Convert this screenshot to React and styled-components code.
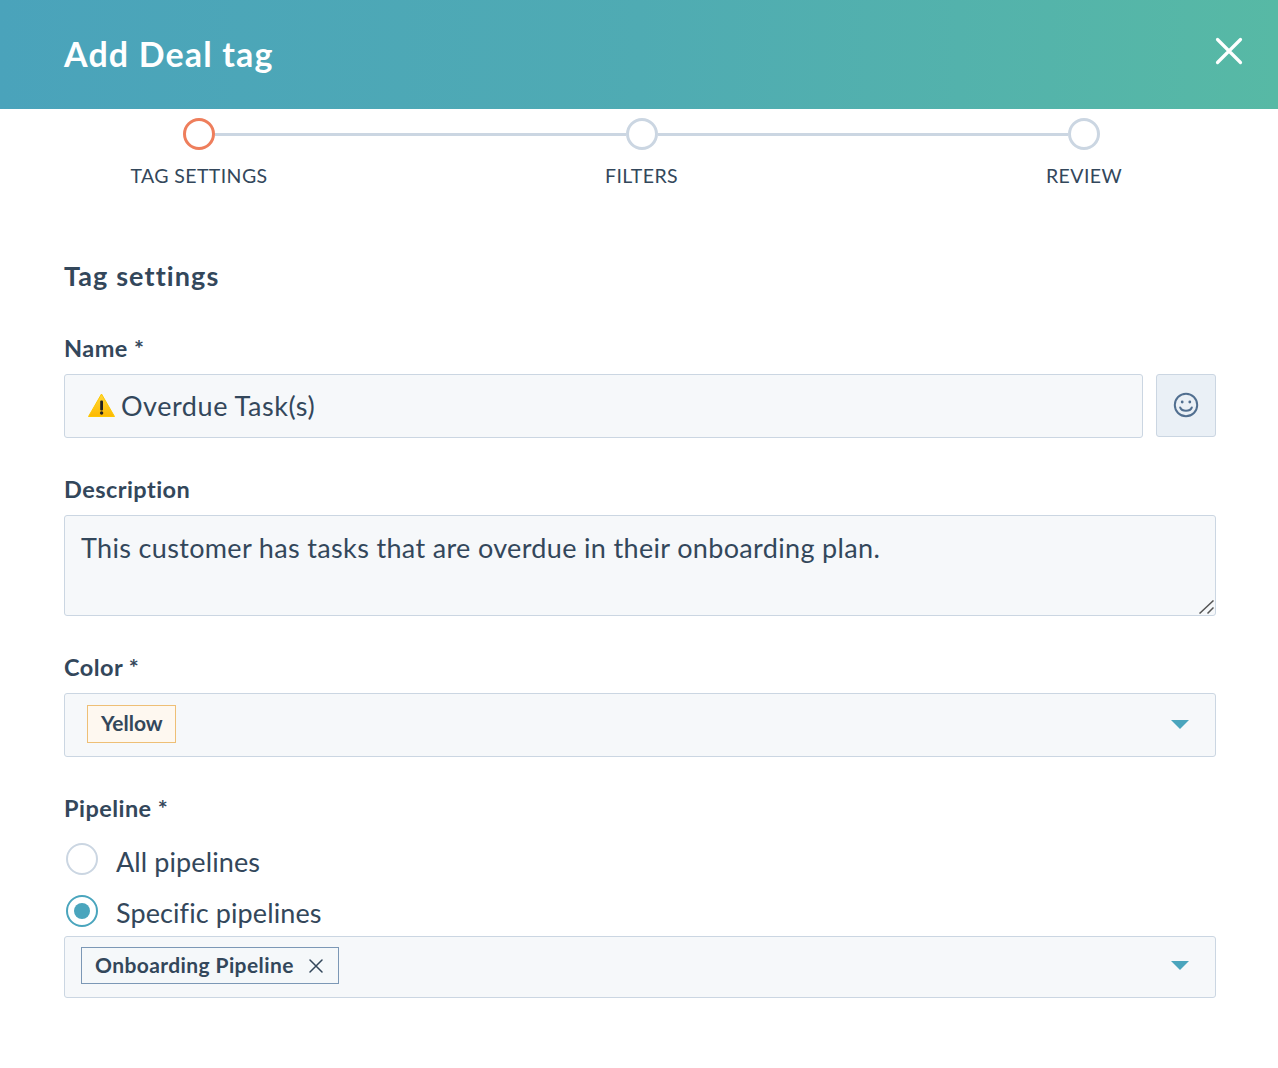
import React from "react";
import styled, { createGlobalStyle } from "styled-components";

const Global = createGlobalStyle`
  html, body { margin: 0; padding: 0; background: #fff; }
  body { font-family: "Lato", "Open Sans", sans-serif; color: #33475b; overflow: hidden; }
  * { box-sizing: border-box; }
`;

const Page = styled.div`
  width: 1278px;
  height: 1068px;
  background: #fff;
`;
const Header = styled.header`
  height: 109px;
  padding: 0 35px 0 64px;
  display: flex;
  align-items: center;
  justify-content: space-between;
  background: linear-gradient(90deg, #4aa3bb 0%, #4fabb3 50%, #57b9a5 100%);
`;
const Title = styled.h1`
  margin: 0 0 2px;
  color: #fff;
  font-size: 34px;
  font-weight: 700;
  letter-spacing: 1.15px;
`;
const Close = styled.button`
  border: 0;
  background: none;
  padding: 0;
  width: 28px;
  height: 28px;
  margin-bottom: 8px;
  display: flex;
`;
const Stepper = styled.div`
  display: flex;
  padding: 9px 178px 0 183px;
  height: 82px;
`;
const Step = styled.div`
  width: 32px;
  flex: none;
  display: flex;
  flex-direction: column;
  align-items: center;
`;
const Dot = styled.div`
  width: 32px;
  height: 32px;
  flex: none;
  border-radius: 50%;
  border: 3px solid ${p => (p.$active ? "#ee7e5c" : "#cbd6e2")};
`;
const StepLabel = styled.div`
  margin-top: 15px;
  font-size: 19.5px;
  line-height: 22px;
  letter-spacing: 0.4px;
  white-space: nowrap;
`;
const Connector = styled.div`
  flex: 1;
  height: 3px;
  margin-top: 15px;
  background: #cbd6e2;
`;
const Body = styled.main`
  padding: 0 62px 0 64px;
  margin-top: 69px;
`;
const Section = styled.h2`
  margin: 0 0 42px;
  font-size: 27px;
  line-height: 32px;
  font-weight: 700;
  letter-spacing: 1.1px;
`;
const Label = styled.label`
  display: block;
  font-size: 23.5px;
  line-height: 28px;
  font-weight: 700;
  letter-spacing: 0.45px;
  margin-bottom: ${p => p.$gap || 12}px;
`;
const Field = styled.div`
  position: relative;
  margin-bottom: ${p => p.$gap}px;
`;
const Row = styled.div`
  display: flex;
  justify-content: space-between;
`;
const Box = styled.div`
  flex: ${p => (p.$short ? "0 0 1079px" : "1")};
  height: ${p => p.$h}px;
  background: #f6f8fa;
  border: 1px solid #cbd6e2;
  border-radius: 3px;
  display: flex;
  align-items: center;
  font-size: 27px;
  letter-spacing: 0.55px;
  padding: ${p => p.$pad};
`;
const Warn = styled.svg`
  width: 27px;
  height: 24px;
  margin: 0 6px 1px 0;
  flex: none;
`;
const EmojiButton = styled.button`
  width: 60px;
  height: 63px;
  padding: 0 0 2px;
  border: 1px solid #cbd6e2;
  border-radius: 3px;
  background: #eaf0f6;
  display: flex;
  align-items: center;
  justify-content: center;
`;
const Area = styled.textarea`
  display: block;
  width: 100%;
  height: 101px;
  margin: 0;
  padding: 15px 16px;
  border: 1px solid #cbd6e2;
  border-radius: 3px;
  background: #f6f8fa;
  color: #33475b;
  font: 400 27px/33px "Lato", sans-serif;
  letter-spacing: 0.34px;
  outline: none;
  resize: none;
`;
const Grip = styled.svg`
  position: absolute;
  right: 2px;
  bottom: 2px;
  width: 15px;
  height: 14px;
  pointer-events: none;
`;
const Tag = styled.span`
  display: inline-flex;
  align-items: center;
  height: ${p => p.$h}px;
  padding: ${p => p.$pad};
  font-size: 21px;
  font-weight: 700;
  background: ${p => p.$bg};
  border: 1px solid ${p => p.$line};
  letter-spacing: ${p => p.$track}px;
`;
const Caret = styled.span`
  margin-left: auto;
  margin-right: 26px;
  width: 0;
  height: 0;
  border-left: 9px solid transparent;
  border-right: 9px solid transparent;
  border-top: 9px solid #4aa5bd;
`;
const RadioGroup = styled.div`
  margin-bottom: -2px;
`;
const Radio = styled.div`
  display: flex;
  align-items: center;
  height: 51px;
  padding-left: 2px;
  font-size: 27px;
  letter-spacing: 0.1px;
`;
const Circle = styled.span`
  width: 32px;
  height: 32px;
  border-radius: 50%;
  border: 2.5px solid ${p => (p.$on ? "#4aa5bd" : "#cbd6e2")};
  margin-right: 18px;
  margin-top: ${p => (p.$on ? -4 : -6)}px;
  display: flex;
  align-items: center;
  justify-content: center;
  &::after {
    content: "";
    display: ${p => (p.$on ? "block" : "none")};
    width: 16px;
    height: 16px;
    border-radius: 50%;
    background: #4aa5bd;
  }
`;
const TagX = styled.svg`
  width: 14px;
  height: 14px;
  margin: 2px 0 0 15px;
`;

export default function App() {
  return (
    <Page>
      <Global />
      <Header>
        <Title>Add Deal tag</Title>
        <Close aria-label="Close">
          <svg width="28" height="28" viewBox="0 0 28 28" fill="none" stroke="#fff" strokeWidth="3.2" strokeLinecap="round">
            <path d="M2.5 2.5 L25.5 25.5 M25.5 2.5 L2.5 25.5" />
          </svg>
        </Close>
      </Header>
      <Stepper>
        <Step><Dot $active /><StepLabel>TAG SETTINGS</StepLabel></Step>
        <Connector />
        <Step><Dot /><StepLabel>FILTERS</StepLabel></Step>
        <Connector />
        <Step><Dot /><StepLabel>REVIEW</StepLabel></Step>
      </Stepper>
      <Body>
        <Section>Tag settings</Section>
        <Label>Name *</Label>
        <Field $gap={37}>
          <Row>
            <Box $short $h={64} $pad="0 0 1px 23px">
              <Warn viewBox="0 0 27 24">
                <defs>
                  <linearGradient id="warnFill" x1="0" y1="0" x2="0" y2="1">
                    <stop offset="0" stopColor="#ffd83a" />
                    <stop offset="1" stopColor="#fdb900" />
                  </linearGradient>
                </defs>
                <path d="M13.5 1 L26.5 23.5 H0.5 Z" fill="url(#warnFill)" stroke="#fdc700" strokeLinejoin="round" />
                <rect x="12.2" y="7.5" width="2.8" height="10" rx="1" fill="#222" />
                <circle cx="13.6" cy="20" r="1.7" fill="#222" />
              </Warn>
              Overdue Task(s)
            </Box>
            <EmojiButton aria-label="Emoji">
              <svg width="26" height="26" viewBox="0 0 26 26" fill="none" stroke="#516f90" strokeWidth="2" strokeLinecap="round">
                <circle cx="13" cy="13" r="11.2" />
                <path d="M7.2 15.5 C9 19.8 17 19.8 18.8 15.5" />
                <circle cx="9.2" cy="10" r="1.4" fill="#516f90" stroke="none" />
                <circle cx="16.8" cy="10" r="1.4" fill="#516f90" stroke="none" />
              </svg>
            </EmojiButton>
          </Row>
        </Field>
        <Label>Description</Label>
        <Field $gap={37}>
          <Area defaultValue="This customer has tasks that are overdue in their onboarding plan." />
          <Grip viewBox="0 0 15 14" fill="none" stroke="#555" strokeWidth="1.5">
            <path d="M0.5 13.5 L14.5 0.5 M8.5 13.5 L14.5 7.5" />
          </Grip>
        </Field>
        <Label>Color *</Label>
        <Field $gap={37}>
          <Box $h={64} $pad="0 0 2px 22px">
            <Tag $h={38} $pad="0 12px 3px 13px" $track={0} $bg="#fef8f0" $line="#eebf76">Yellow</Tag>
            <Caret />
          </Box>
        </Field>
        <Label $gap={14}>Pipeline *</Label>
        <RadioGroup>
          <Radio><Circle />All pipelines</Radio>
          <Radio><Circle $on />Specific pipelines</Radio>
        </RadioGroup>
        <Box $h={62} $pad="0 0 3px 16px">
          <Tag $h={37} $pad="0 15px 2px 13px" $track={0.4} $bg="#f5f8fa" $line="#7c98b6">
            Onboarding Pipeline
            <TagX viewBox="0 0 14 14" fill="none" stroke="#33475b" strokeWidth="1.5" strokeLinecap="round">
              <path d="M1 1 L13 13 M13 1 L1 13" />
            </TagX>
          </Tag>
          <Caret />
        </Box>
      </Body>
    </Page>
  );
}
